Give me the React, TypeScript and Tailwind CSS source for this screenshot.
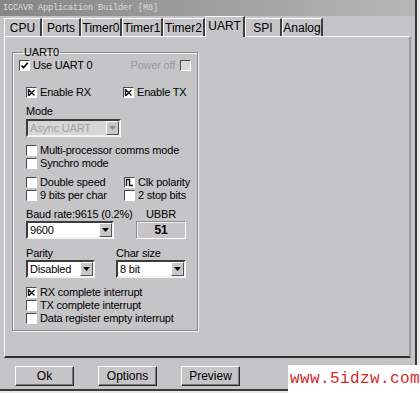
import React from "react";

const TABS = [
  { name: "CPU", w: "w-[38px]" },
  { name: "Ports", w: "w-[39px]" },
  { name: "Timer0", w: "w-[41px]" },
  { name: "Timer1", w: "w-[41px]" },
  { name: "Timer2", w: "w-[42px]" },
  { name: "UART", w: "w-[40px]" },
  { name: "SPI", w: "w-[37px]" },
  { name: "Analog", w: "w-[41px]" },
];

function Mark({ kind }: { kind?: "v" | "x" | "clk" }) {
  if (kind === "v")
    return (
      <svg viewBox="0 0 9 9" className="w-[9px] h-[9px]">
        <path d="M1.5 4.5 L3.5 6.8 L7.8 1.8" stroke="#000" strokeWidth="1.7" fill="none" />
      </svg>
    );
  if (kind === "x")
    return (
      <svg viewBox="0 0 9 9" className="w-[9px] h-[9px]">
        <path d="M1.5 1 V8 M2 2 L7.5 7.5 M7.5 2 L2 7.5" stroke="#111" strokeWidth="1.4" fill="none" />
      </svg>
    );
  if (kind === "clk")
    return (
      <svg viewBox="0 0 9 9" className="w-[9px] h-[9px]">
        <path d="M1.5 8 V1.5 H4.5 V7.5 H8" stroke="#111" strokeWidth="1.4" fill="none" />
      </svg>
    );
  return null;
}

function Box({ kind, disabled }: { kind?: "v" | "x" | "clk"; disabled?: boolean }) {
  return (
    <span
      className={`w-[11px] h-[11px] shrink-0 flex items-center justify-center border border-t-[#4a4a4a] border-l-[#4a4a4a] border-b-white border-r-white ${
        disabled ? "bg-[#d8d8d8]" : "bg-white"
      }`}
    >
      <Mark kind={kind} />
    </span>
  );
}

function Check({ label, kind, className = "" }: { label: string; kind?: "v" | "x" | "clk"; className?: string }) {
  return (
    <div className={`flex items-center gap-[3px] h-[13px] ${className}`}>
      <Box kind={kind} />
      <span className="leading-none whitespace-nowrap">{label}</span>
    </div>
  );
}

function Select({ value, w, disabled }: { value: string; w: string; disabled?: boolean }) {
  return (
    <div
      className={`${w} h-[18px] flex border-2 border-t-[#3c3c3c] border-l-[#3c3c3c] border-b-[#f2f2f2] border-r-[#f2f2f2] ${
        disabled ? "bg-[#d6d6d6] text-[#a2a2a2]" : "bg-white text-black"
      }`}
    >
      <span className="flex-1 pl-[2px] leading-[14px] whitespace-nowrap overflow-hidden">{value}</span>
      <span className="w-[13px] h-[14px] bg-[#c8c8c8] border border-t-white border-l-white border-b-[#555] border-r-[#555] flex items-center justify-center">
        <svg viewBox="0 0 7 4" className="w-[7px] h-[4px]">
          <path d="M0 0 H7 L3.5 4 Z" fill={disabled ? "#8c8c8c" : "#000"} />
        </svg>
      </span>
    </div>
  );
}

function Btn({ label }: { label: string }) {
  return (
    <button className="w-[59px] h-[20px] bg-[#c5c5c7] border border-t-white border-l-white border-b-[#2a2a2a] border-r-[#2a2a2a] shadow-[inset_-1px_-1px_0_#7a7a7a] text-[12px] leading-none text-black">
      {label}
    </button>
  );
}

export default function App() {
  return (
    <div className="w-[420px] h-[393px] overflow-hidden bg-[#e9e9e9] relative font-['Liberation_Sans',Arial,sans-serif] text-[11px] tracking-[-0.2px] text-black">
      <div className="w-[417px] h-[391px] bg-[#c5c5c7] border-r-2 border-b-2 border-[#3a3a3a] flex flex-col">
        {/* Title bar */}
        <div className="h-[16px] shrink-0 bg-gradient-to-r from-[#868686] to-[#b7b7b7] flex items-center pl-[3px] font-['Liberation_Mono',monospace] text-[8.5px] text-[#dcdcdc] tracking-[-0.1px]">
          ICCAVR Application Builder [M8]
        </div>

        {/* Tabs */}
        <div className="h-[20px] shrink-0 flex items-end pl-[4px] tracking-normal">
          {TABS.map((t) => {
            const sel = t.name === "UART";
            return (
              <div
                key={t.name}
                className={`${t.w} flex items-center justify-center text-[12px] border-l border-l-white border-r-2 border-r-[#3e3e3e] border-t border-t-white ${
                  sel ? "h-[21px] -mb-px relative z-10 bg-[#c5c5c7] pb-[2px]" : "h-[18px] bg-[#c5c5c7] pt-[1px]"
                }`}
              >
                {t.name}
              </div>
            );
          })}
        </div>

        {/* Panel */}
        <div className="h-[322px] shrink-0 ml-[4px] mr-[4px] border-t border-l border-white border-r-2 border-r-[#9a9a9a] border-b-2 border-b-[#2c2c2c] pt-[9px] pl-[7px]">
          <fieldset className="w-[186px] h-[285px] border border-[#8a8a8a] shadow-[inset_1px_1px_0_#f4f4f4,1px_1px_0_#f4f4f4] pl-[6px] pr-[6px]">
            <legend className="ml-[4px] px-[1px] text-[11px] leading-[12px]">UART0</legend>

            <div className="mt-0 flex items-center justify-between h-[14px]">
              <Check label="Use UART 0" kind="v" />
              <div className="flex items-center gap-[5px]">
                <span className="text-[#9b9b9b]">Power off</span>
                <Box disabled />
              </div>
            </div>

            <div className="pl-[7px]">
              <div className="mt-[14px] flex">
                <Check label="Enable RX" kind="x" className="w-[97px]" />
                <Check label="Enable TX" kind="x" />
              </div>

              <div className="mt-[6px] h-[12px] leading-[12px]">Mode</div>
              <div className="mt-[2px]">
                <Select value="Async UART" w="w-[95px]" disabled />
              </div>

              <Check label="Multi-processor comms mode" className="mt-[7px]" />
              <Check label="Synchro mode" />

              <div className="mt-[6px] flex">
                <div className="w-[98px]">
                  <Check label="Double speed" />
                  <Check label="9 bits per char" />
                </div>
                <div>
                  <Check label="Clk polarity" kind="clk" />
                  <Check label="2 stop bits" />
                </div>
              </div>

              <div className="mt-[6px] flex">
                <div className="w-[110px]">
                  <div className="h-[12px] leading-[12px] whitespace-nowrap">Baud rate:9615 (0.2%)</div>
                  <div className="mt-[1px]">
                    <Select value="9600" w="w-[88px]" />
                  </div>
                </div>
                <div className="w-[50px]">
                  <div className="h-[12px] leading-[12px] text-center">UBBR</div>
                  <div className="mt-[1px] h-[18px] border border-t-[#8e8e8e] border-l-[#8e8e8e] border-b-white border-r-white shadow-[inset_1px_1px_0_#ededed] flex items-center justify-center font-bold text-[12px]">
                    51
                  </div>
                </div>
              </div>

              <div className="mt-[8px] flex">
                <div className="w-[90px]">
                  <div className="h-[12px] leading-[12px]">Parity</div>
                  <div className="mt-[1px]">
                    <Select value="Disabled" w="w-[69px]" />
                  </div>
                </div>
                <div>
                  <div className="h-[12px] leading-[12px]">Char size</div>
                  <div className="mt-[1px]">
                    <Select value="8 bit" w="w-[70px]" />
                  </div>
                </div>
              </div>

              <Check label="RX complete interrupt" kind="x" className="mt-[8px]" />
              <Check label="TX complete interrupt" />
              <Check label="Data register empty interrupt" />
            </div>
          </fieldset>
        </div>

        {/* Buttons */}
        <div className="flex-1 flex items-start pt-[8px] pl-[15px] gap-[24px] tracking-normal">
          <Btn label="Ok" />
          <Btn label="Options" />
          <Btn label="Preview" />
        </div>
      </div>

      {/* Watermark */}
      <div className="absolute left-[288px] top-[365px] w-[132px] h-[28px] bg-white flex items-center pl-[2px] font-['Liberation_Mono',monospace] text-[16px] text-[#d42a2a] tracking-[0.4px]">
        www.5idzw.com
      </div>
    </div>
  );
}
